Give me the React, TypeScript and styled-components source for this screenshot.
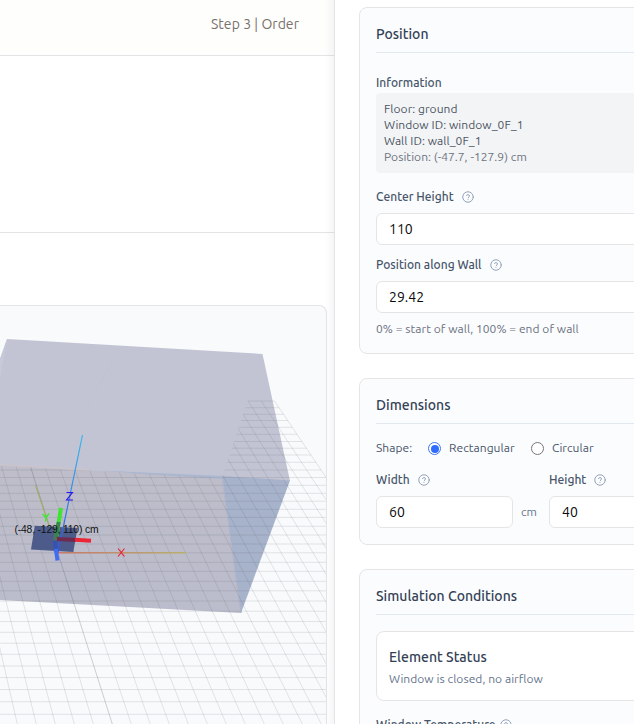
import React from 'react';
import styled, { createGlobalStyle } from 'styled-components';

const GlobalStyle = createGlobalStyle`
  *, *::before, *::after { box-sizing: border-box; }
  html, body { margin: 0; height: 100%; overflow: hidden; }
  body {
    background: #fff;
    font-family: Ubuntu, "Noto Sans", sans-serif;
    font-size: 12px;
    line-height: 16px;
    letter-spacing: 0.045px;
    color: #475569;
  }
`;

const Page = styled.div`
  display: flex;
  width: 100%;
  height: 100vh;
  overflow: hidden;
`;

const Workspace = styled.main`
  flex: 0 0 334px;
  display: flex;
  flex-direction: column;
  min-width: 0;
  overflow: hidden;
`;

const TopBar = styled.header`
  flex: 0 0 56px;
  display: flex;
  justify-content: flex-end;
  padding: 14px 35px 0 0;
  background: #fefefc;
  border-bottom: 1px solid #e3e4e6;
`;

const StepLabel = styled.span`
  font-size: 14px;
  line-height: 20px;
  color: #78716c;
`;

const Toolbar = styled.div`
  flex: 0 0 177px;
  border-bottom: 1px solid #e3e4e6;
`;

const ViewerArea = styled.section`
  flex: 1;
  display: flex;
  padding: 72px 7px 0 0;
  min-height: 0;
`;

const Viewer = styled.div`
  flex: 1;
  overflow: hidden;
  background: #f9fafc;
  border: 1px solid #e3e4e6;
  border-width: 1px 1px 0 0;
  border-radius: 0 8px 0 0;
`;

const Scene = styled.svg`
  display: block;
  width: 326px;
  height: 418px;
`;

const Panel = styled.aside`
  position: relative;
  flex: 1;
  min-width: 0;
  padding: 7px 0 0 24px;
  overflow: hidden;
  background: #fff;
  border-left: 1px solid #e3e4e6;
`;

const PanelShade = styled.div`
  position: absolute;
  left: 325px;
  top: 0;
  width: 9px;
  height: 100vh;
  background: linear-gradient(to right, rgba(0, 0, 0, 0), rgba(0, 0, 0, 0.04));
`;

const Cards = styled.div`
  display: flex;
  flex-direction: column;
  width: 400px;
`;

const Card = styled.section<{ $height: number; $after: number }>`
  flex: none;
  height: ${(p) => p.$height}px;
  margin-bottom: ${(p) => p.$after}px;
  padding: 16px 16px 0;
  background: #fbfcfe;
  border: 1px solid #e5e5e5;
  border-radius: 8px;
`;

const CardTitle = styled.h2`
  height: 29px;
  margin: 0;
  font-size: 14px;
  font-weight: 550;
  line-height: 20px;
  letter-spacing: 0.02px;
  color: #334155;
  border-bottom: 1px solid #e2e8f0;
`;

const Label = styled.label<{ $top?: number; $gap?: number }>`
  display: flex;
  align-items: center;
  gap: ${(p) => p.$gap ?? 8}px;
  height: 16px;
  margin-top: ${(p) => p.$top ?? 0}px;
  font-weight: 550;
  letter-spacing: 0.02px;
  white-space: nowrap;
`;

const InfoBox = styled.div`
  height: 80px;
  margin-top: 2px;
  padding: 8px;
  background: #f3f4f6;
  border-radius: 4px;
  color: #4b5563;
`;

const InfoLine = styled.div<{ $muted?: boolean }>`
  color: ${(p) => (p.$muted ? '#6b7280' : 'inherit')};
`;

const Field = styled.input<{ $width?: string }>`
  display: block;
  width: ${(p) => p.$width ?? '100%'};
  height: 32px;
  margin: 8px 0 0;
  padding: 0 12px;
  font: 14px Ubuntu, "Noto Sans", sans-serif;
  color: #09090b;
  background: #fff;
  border: 1px solid #e5e5e5;
  border-radius: 6px;
  outline: none;
`;

const Hint = styled.p`
  margin: 8px 0 0;
  color: #6b7280;
`;

const ShapeRow = styled.div`
  display: flex;
  align-items: center;
  height: 16px;
  margin-top: 16px;
  color: #475569;
`;

const ShapeCaption = styled.span`
  width: 52px;
`;

const RadioOption = styled.label<{ $width: number }>`
  display: flex;
  align-items: center;
  gap: 8px;
  width: ${(p) => p.$width}px;
`;

const RadioMark = styled.span<{ $on?: boolean }>`
  display: flex;
  align-items: center;
  justify-content: center;
  width: 13px;
  height: 13px;
  margin-top: 1px;
  background: #fff;
  border: 1px solid ${(p) => (p.$on ? '#3b76f6' : '#767676')};
  border-radius: 50%;

  &::after {
    content: '';
    width: 8px;
    height: 8px;
    border-radius: 50%;
    background: ${(p) => (p.$on ? '#2f6bff' : 'transparent')};
  }
`;

const SizeRow = styled.div`
  display: flex;
  gap: 12px;
  margin-top: 16px;
`;

const SizeItem = styled.div`
  width: 161px;
`;

const FieldWithUnit = styled.div`
  display: flex;
  align-items: center;
  gap: 8px;
`;

const Unit = styled.span`
  margin-top: 8px;
  letter-spacing: 0;
  color: #64748b;
`;

const StatusBox = styled.div`
  height: 70px;
  margin: 16px 0 16px;
  padding: 15px 12px;
  background: #fff;
  border: 1px solid #e7e5e4;
  border-radius: 8px;
`;

const StatusTitle = styled.h3`
  margin: 0 0 4px;
  font-size: 14px;
  font-weight: 550;
  line-height: 20px;
  letter-spacing: 0.02px;
  color: #334155;
`;

const StatusText = styled.p`
  margin: 0;
  color: #64748b;
`;

const HelpSvg = styled.svg`
  flex: none;
  width: 12px;
  height: 12px;
  color: #94a3b8;
`;

const Help = () => (
  <HelpSvg viewBox="0 0 24 24" fill="none" stroke="currentColor" strokeWidth="2" strokeLinecap="round" strokeLinejoin="round">
    <circle cx="12" cy="12" r="10.5" />
    <path d="M9.1 9a3 3 0 0 1 5.8 1c0 2-2.9 2.6-2.9 3.6M12 17.2h.01" />
  </HelpSvg>
);

// Ground grid: rows are horizontal, columns converge to one vanishing point.
const ROWS = [
  401, 407.7, 414.3, 420.5, 427.3, 434.3, 441.5, 448.2, 455, 462.3, 470, 477.5, 485.3, 493.3,
  501.2, 509.3, 517.4, 526.3, 535, 544, 552.8, 562.3, 571.3, 581.3, 590.8, 601, 611.2, 621.5,
  632.3, 643.2, 654.3, 666, 677.5, 689.5, 701.7, 714.3,
];
const VX = -227;
const VY = -343;
const columnX = (k: number, y: number) => VX + ((339.3 + 19 * k) * (y - VY)) / 1067;
const COLUMNS = Array.from({ length: 34 }, (_, i) => i - 13);

const Grid = () => (
  <>
    {ROWS.map((y) => (
      <line key={y} x1={-10} x2={columnX(20, y)} y1={y} y2={y} />
    ))}
    {COLUMNS.map((k) => (
      <line key={k} x1={columnX(k, 401)} y1={401} x2={columnX(k, 726)} y2={726} />
    ))}
    <line x1={columnX(0, 460)} y1={460} x2={columnX(0, 726)} y2={726} />
  </>
);

const House = () => (
  <Scene viewBox="0 306 326 418" fill="none">
    <defs>
      <clipPath id="ground"><path d="M0 466 222 478 222 477 248 400H326V724H0Z" /></clipPath>
      <linearGradient id="zAxis" x1="82" y1="435" x2="58" y2="552" gradientUnits="userSpaceOnUse">
        <stop stopColor="#38b9ec" />
        <stop offset="1" stopColor="#3154e8" />
      </linearGradient>
      <linearGradient id="xAxis" x1="58" y1="0" x2="186" y2="0" gradientUnits="userSpaceOnUse">
        <stop stopColor="#c87868" />
        <stop offset="0.6" stopColor="#bd9870" />
        <stop offset="1" stopColor="#b9b16c" />
      </linearGradient>
      <linearGradient id="front" x1="0" y1="466" x2="0" y2="612" gradientUnits="userSpaceOnUse">
        <stop stopColor="#bebdc9" />
        <stop offset="1" stopColor="#bbbccc" />
      </linearGradient>
    </defs>

    <path d="M0 359 7 339 262.500 354 290 481 222 479 0 466Z" fill="#c2c4d3" />
    <path d="M0 359 7 339 0 379Z" fill="#c6c9d9" />
    <path d="M0 465 222 478 241 613 0 600Z" fill="url(#front)" />
    <path d="M222 476 290 480.500 241 613Z" fill="#a7b2cb" />
    <path d="M100 470.500 222 476 223 479 150 474.500Z" fill="#abb6cf" />
    <path d="M0 464.700 88 469.700" stroke="#cbc4cb" strokeWidth="1.500" />
    <path d="M222 478 241 613" stroke="#a9aec5" strokeWidth="0.800" />
    <path d="M119 349 80 420" stroke="#bfc1d1" strokeWidth="0.700" />

    <g clipPath="url(#ground)" stroke="#5a5f68" strokeOpacity="0.150" strokeWidth="1"><Grid /></g>

    <path d="M35.500 485.500 55 543" stroke="#9caf52" />
    <path d="M58 552.800H186" stroke="url(#xAxis)" strokeWidth="1.600" />
    <path d="M34.800 525.700 77.500 528 73.300 552 31 549.500Z" fill="#4c5b89" />
    <path d="M82.500 435 58 552.500" stroke="url(#zAxis)" strokeWidth="1.200" />
    <path d="M61 508 56.500 536" stroke="#3ce52f" strokeWidth="4" />
    <path d="M58.700 522 55.500 539" stroke="#39834f" strokeWidth="4" />
    <path d="M56 539 76 540" stroke="#70294f" strokeWidth="4" />
    <path d="M75 539.700 91 540.700" stroke="#eb2636" strokeWidth="4" />
    <path d="M54.800 539 56 552" stroke="#3552bb" strokeWidth="4" />
    <path d="M55.800 549 57.500 560.500" stroke="#416cf2" strokeWidth="4" />
    <path d="M53 539h4" stroke="#55705e" strokeWidth="3" />

    <path d="M66.500 492.500h6l-6 7.500h6.500" stroke="#3510e8" strokeWidth="1.100" />
    <path d="M42.500 514 46 517.500 49 513.500M46 517.500 45.500 521.500" stroke="#31ef22" strokeWidth="1.400" />
    <path d="M118 548.500 124.500 556.500M124.500 548.500 118 556.500" stroke="#f01b2b" strokeWidth="1.100" />
    <text x="14.500" y="533" fill="#111" fontFamily="Liberation Sans, Arial, sans-serif" fontSize="10.300" textLength="84">
      (-48, -129, 110) cm
    </text>
  </Scene>
);

export default function App() {
  return (
    <Page>
      <GlobalStyle />
      <Workspace>
        <TopBar><StepLabel>Step 3 | Order</StepLabel></TopBar>
        <Toolbar />
        <ViewerArea>
          <Viewer><House /></Viewer>
        </ViewerArea>
        <PanelShade />
      </Workspace>
      <Panel>
        <Cards>
          <Card $height={347} $after={24}>
            <CardTitle>Position</CardTitle>
            <Label $top={22}>Information</Label>
            <InfoBox>
              <InfoLine>Floor: ground</InfoLine>
              <InfoLine>Window ID: window_0F_1</InfoLine>
              <InfoLine>Wall ID: wall_0F_1</InfoLine>
              <InfoLine $muted>Position: (-47.7, -127.9) cm</InfoLine>
            </InfoBox>
            <Label $top={16}>Center Height <Help /></Label>
            <Field defaultValue="110" />
            <Label $top={12}>Position along Wall <Help /></Label>
            <Field defaultValue="29.42" />
            <Hint>0% = start of wall, 100% = end of wall</Hint>
          </Card>
          <Card $height={167} $after={24}>
            <CardTitle>Dimensions</CardTitle>
            <ShapeRow>
              <ShapeCaption>Shape:</ShapeCaption>
              <RadioOption $width={103}><RadioMark $on />Rectangular</RadioOption>
              <RadioOption $width={80}><RadioMark />Circular</RadioOption>
            </ShapeRow>
            <SizeRow>
              <SizeItem>
                <Label>Width <Help /></Label>
                <FieldWithUnit><Field $width="137px" defaultValue="60" /><Unit>cm</Unit></FieldWithUnit>
              </SizeItem>
              <SizeItem>
                <Label>Height <Help /></Label>
                <FieldWithUnit><Field $width="137px" defaultValue="40" /></FieldWithUnit>
              </SizeItem>
            </SizeRow>
          </Card>
          <Card $height={400} $after={0}>
            <CardTitle>Simulation Conditions</CardTitle>
            <StatusBox>
              <StatusTitle>Element Status</StatusTitle>
              <StatusText>Window is closed, no airflow</StatusText>
            </StatusBox>
            <Label $gap={4}>Window Temperature <Help /></Label>
          </Card>
        </Cards>
      </Panel>
    </Page>
  );
}
